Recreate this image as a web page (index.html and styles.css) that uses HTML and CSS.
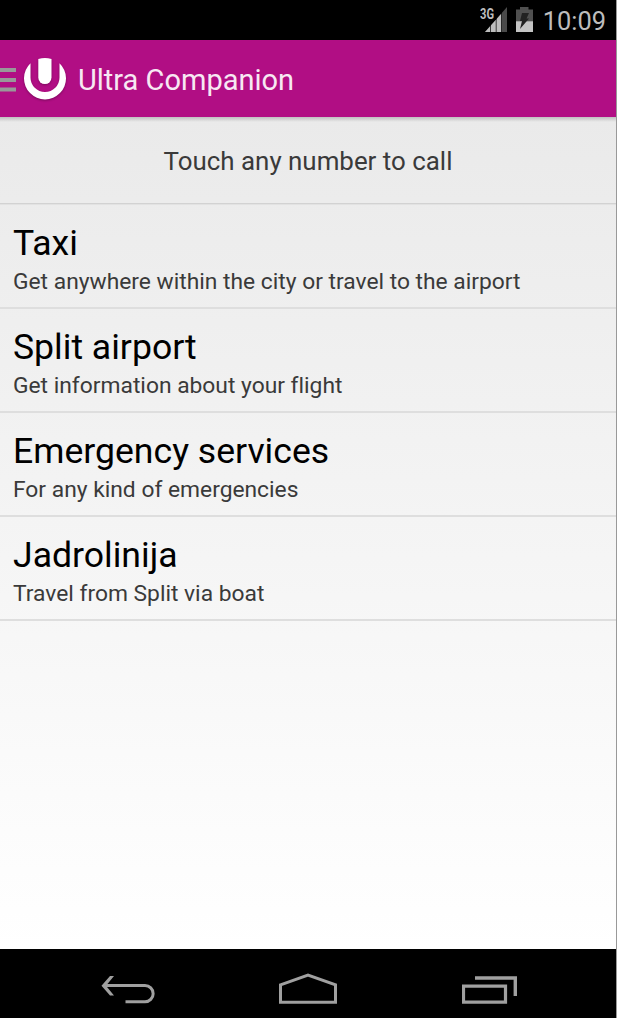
FILE: index.html
```html
<!DOCTYPE html>
<html lang="en">
<head>
  <meta charset="UTF-8" />
  <meta name="viewport" content="width=device-width, initial-scale=1.0"/>
  <title>Ultra Companion</title>
  <link rel="stylesheet" href="styles.css">
</head>
<body>

  <div class="screen">
    <!-- Status bar -->
    <div class="status-bar">
      <svg class="signal" width="28" height="28" viewBox="0 0 28 28">
        <path d="M27 0V25H5Z" fill="#4a4a4a"/>
        <path d="M21.500 6.500V25H5Z" fill="#bdbdbd"/>
        <path d="M10.500 17v8M16.200 10v15M21.500 5v20" stroke="#000" stroke-width="0.700"/>
        <path d="M0 0H16V13H0Z" fill="#000"/>
        <text class="network" x="0" y="11.500" textLength="14" lengthAdjust="spacingAndGlyphs">3G</text>
      </svg>
      <svg class="battery" width="17" height="25" viewBox="0 0 17 25">
        <path d="M4 0h8.500v2.500H17V25H0V2.500h4Z" fill="#505050"/>
        <path d="M0 14.300h17V25H0Z" fill="#c4c4c4"/>
        <path d="M6 6h7l-2.500 5.500H13L4 22l2-8H4Z" fill="#222"/>
      </svg>
      <span class="clock">10:09</span>
    </div>

    <!-- Action bar -->
    <header class="action-bar">
      <svg class="menu" width="16" height="24" viewBox="0 0 16 24">
        <path d="M0 2h16M0 12h16M0 21.500h16" stroke="#999" stroke-width="4"/>
      </svg>
      <svg class="logo" width="44" height="44" viewBox="0 0 44 44">
        <path d="M7.500 6.200A21 21 0 1 0 36.500 6.200V20.500A14.500 14.500 0 0 1 7.500 20.500Z" fill="#fff"/>
        <path d="M15.300 2Q22 0 28.500 2V20.500A6.600 6.600 0 0 1 15.300 20.500Z" fill="#fff"/>
      </svg>
      <h1>Ultra Companion</h1>
    </header>

    <!-- Contacts -->
    <main class="content">
      <p class="hint">Touch any number to call</p>
      <ul class="contacts">
        <li>
          <h2>Taxi</h2>
          <p>Get anywhere within the city or travel to the airport</p>
        </li>
        <li>
          <h2>Split airport</h2>
          <p>Get information about your flight</p>
        </li>
        <li>
          <h2>Emergency services</h2>
          <p>For any kind of emergencies</p>
        </li>
        <li>
          <h2>Jadrolinija</h2>
          <p>Travel from Split via boat</p>
        </li>
      </ul>
    </main>

    <!-- Navigation bar -->
    <nav class="nav-bar">
      <svg width="54" height="30" viewBox="0 0 54 30">
        <path d="M3.500 11.500H44A8.150 8.150 0 0 1 44 27.800H24.500" fill="none" stroke="#a0a0a0" stroke-width="3"/>
        <path d="M13 2H9L0.500 11.700L9 21.500H13L5 11.700Z" fill="#a0a0a0"/>
      </svg>
      <svg width="60" height="31" viewBox="0 0 60 31">
        <path d="M1.500 11.800L29 2.200L56.500 11.800V29.200H1.500Z" fill="none" stroke="#a0a0a0" stroke-width="3"/>
      </svg>
      <svg width="55" height="28" viewBox="0 0 55 28">
        <path d="M1.500 10.200H43.500V26.200H1.500Z" fill="none" stroke="#a0a0a0" stroke-width="3.200"/>
        <path d="M13 2H53.300V20" fill="none" stroke="#a0a0a0" stroke-width="3.400"/>
      </svg>
    </nav>
  </div>

</body>
</html>
```
FILE: styles.css
```css
* { box-sizing: border-box; }
body { font-family: Roboto, sans-serif; margin: 0; background: #000; }
h1, h2, p, ul { margin: 0; padding: 0; font-weight: 400; }
svg { display: block; flex: none; }

.screen { display: flex; flex-direction: column; height: 1018px; border-right: 1px solid #999; }

.status-bar { display: flex; height: 40px; padding: 7px 10px 0 0; justify-content: flex-end; background: #000; }
.signal { margin-right: 8px; }
.network { font-size: 14px; font-weight: 700; fill: #bdbdbd; }
.battery { margin-right: 10px; }
.clock { font-size: 25.4px; line-height: 28px; color: #bdbdbd; }

.action-bar { display: flex; align-items: center; height: 77px; padding-top: 3px; background: #b10e84; }
.menu { margin-right: 7px; }
.logo { margin-right: 11px; margin-bottom: 3px; filter: drop-shadow(0 1px 1px rgba(0, 0, 0, 0.3)); }
.action-bar h1 { font-size: 29px; line-height: 40px; color: #f7e8f3; }

.content { height: 832px; background: linear-gradient(rgba(0, 0, 0, 0.18), rgba(0, 0, 0, 0) 5px), linear-gradient(#eaeaea, #eee 20%, #fff); }
.hint { height: 86px; line-height: 88px; text-align: center; font-size: 25.9px; color: #3a3a3a; }
.contacts { list-style: none; }
.contacts::before { content: ""; display: block; height: 2px; background: linear-gradient(#d2d2d2 50%, #e2e2e2 50%); }
.contacts li { height: 104px; padding: 16px 13px 0; border-bottom: 2px solid #dedede; }
.contacts h2 { font-size: 35.6px; line-height: 44px; color: #000; }
.contacts p { font-size: 22.8px; line-height: 33px; color: #3a3a3a; font-variant-ligatures: none; }

.nav-bar { display: flex; flex: 1; align-items: flex-end; justify-content: space-between; padding: 0 99px 14px 101px; background: #000; }
```
